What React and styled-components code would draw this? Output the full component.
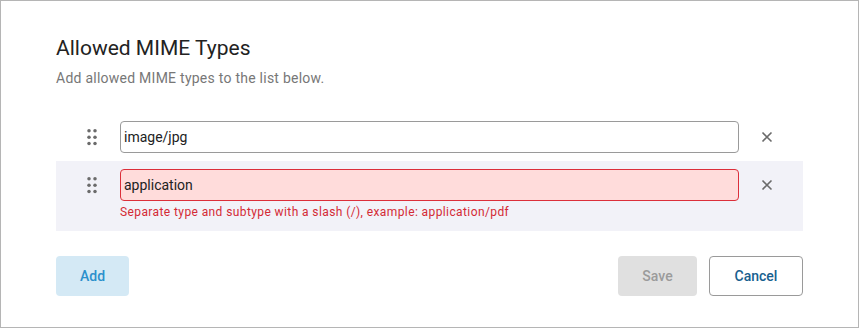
import styled, { createGlobalStyle } from "styled-components";

const GlobalStyle = createGlobalStyle`
  * { box-sizing: border-box; }
  body {
    margin: 0;
    font-family: Roboto, "Noto Sans", sans-serif;
    background: #fff;
  }
`;

const items = [
  { value: "image/jpg" },
  {
    value: "application",
    error: "Separate type and subtype with a slash (/), example: application/pdf",
    active: true,
  },
];

const DragIcon = () => (
  <svg width="24" height="24" viewBox="0 0 24 24" fill="#6b6b6b">
    <circle cx="9" cy="5.8" r="1.75" />
    <circle cx="15" cy="5.8" r="1.75" />
    <circle cx="9" cy="12.2" r="1.75" />
    <circle cx="15" cy="12.2" r="1.75" />
    <circle cx="9" cy="18.6" r="1.75" />
    <circle cx="15" cy="18.6" r="1.75" />
  </svg>
);

const CloseIcon = () => (
  <svg width="24" height="24" viewBox="0 0 24 24">
    <path d="M7.5 7.5l9 9M16.5 7.5l-9 9" stroke="#6b6b6b" strokeWidth="1.6" fill="none" />
  </svg>
);

const App = () => {
  return (
    <>
      <GlobalStyle />
      <Dialog>
        <Title>Allowed MIME Types</Title>
        <Subtitle>Add allowed MIME types to the list below.</Subtitle>
        <List>
          {items.map((item) => (
            <Row key={item.value} $active={item.active}>
              <Handle>
                <DragIcon />
              </Handle>
              <Field>
                <Input defaultValue={item.value} $error={!!item.error} />
                {item.error && <ErrorText>{item.error}</ErrorText>}
              </Field>
              <Remove>
                <CloseIcon />
              </Remove>
            </Row>
          ))}
        </List>
        <Footer>
          <AddButton>Add</AddButton>
          <Actions>
            <SaveButton disabled>Save</SaveButton>
            <CancelButton>Cancel</CancelButton>
          </Actions>
        </Footer>
      </Dialog>
    </>
  );
};

const Dialog = styled.div`
  width: 859px;
  height: 328px;
  border: 1px solid #b5b5b5;
  padding: 34px 55px 0;
`;

const Title = styled.h1`
  margin: 0;
  font-size: 21px;
  line-height: 26px;
  font-weight: 400;
  color: #222;
`;

const Subtitle = styled.p`
  margin: 9px 0 0;
  font-size: 14px;
  line-height: 16px;
  letter-spacing: 0.25px;
  color: #777;
`;

const List = styled.div`
  margin-top: 27px;
  display: flex;
  flex-direction: column;
`;

const Row = styled.div`
  display: flex;
  align-items: flex-start;
  gap: 16px;
  padding: 8px 24px ${(p) => (p.$active ? "11px" : "8px")};
  background: ${(p) => (p.$active ? "#f2f2f8" : "transparent")};
`;

const Handle = styled.div`
  width: 24px;
  height: 32px;
  display: flex;
  align-items: center;
  justify-content: center;
  flex: none;
`;

const Field = styled.div`
  flex: 1;
  display: flex;
  flex-direction: column;
`;

const Input = styled.input`
  height: 32px;
  width: 100%;
  border: 1px solid ${(p) => (p.$error ? "#dc2f3a" : "#9a9a9a")};
  background: ${(p) => (p.$error ? "#ffdcdb" : "#fff")};
  border-radius: 4px;
  padding: 0 3px;
  font-family: Roboto, sans-serif;
  font-size: 14px;
  color: #222;
  outline: none;
`;

const ErrorText = styled.div`
  margin-top: 3px;
  font-size: 12px;
  line-height: 16px;
  letter-spacing: 0.4px;
  color: #d42a35;
`;

const Remove = styled.button`
  width: 24px;
  height: 32px;
  padding: 0;
  border: none;
  background: none;
  display: flex;
  align-items: center;
  justify-content: center;
  flex: none;
`;

const Footer = styled.div`
  margin-top: 25px;
  display: flex;
  justify-content: space-between;
  width: 747px;
`;

const Actions = styled.div`
  display: flex;
  gap: 12px;
`;

const Button = styled.button`
  height: 40px;
  border-radius: 4px;
  font-family: Roboto, sans-serif;
  font-size: 14px;
  font-weight: 500;
  padding: 0;
`;

const AddButton = styled(Button)`
  width: 73px;
  border: none;
  background: #d4e9f5;
  color: #2b90cc;
`;

const SaveButton = styled(Button)`
  width: 79px;
  border: none;
  background: #e0e0e0;
  color: #9b9b9b;
`;

const CancelButton = styled(Button)`
  width: 94px;
  border: 1px solid #9a9a9a;
  background: #fff;
  color: #17608f;
`;

export default App;
